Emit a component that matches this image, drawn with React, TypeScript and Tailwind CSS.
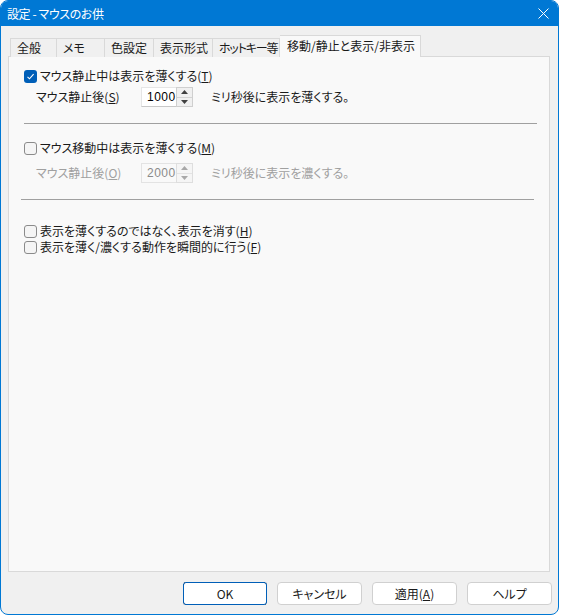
import React from 'react';

const font = "font-['Noto_Sans_CJK_JP','Noto_Sans',sans-serif] [font-feature-settings:'palt']";

const Check = ({ checked }: { checked?: boolean }) =>
  checked ? (
    <span className="w-[13px] h-[13px] rounded-[3px] bg-[#005fb8] flex items-center justify-center shrink-0">
      <svg width="9" height="9" viewBox="0 0 9 9">
        <path d="M1.5 4.8 L3.5 6.8 L7.6 2.2" fill="none" stroke="#fff" strokeWidth="1.1" />
      </svg>
    </span>
  ) : (
    <span className="w-[13px] h-[13px] rounded-[3px] border border-[#8b8b8b] bg-[#f5f5f5] shrink-0" />
  );

const Spin = ({ value, disabled }: { value: string; disabled?: boolean }) => (
  <div className="flex w-[52px] h-[20px]">
    <div
      className={`w-[35px] h-full flex items-center pl-[5px] text-[12px] tracking-[0.5px] font-['Liberation_Sans',sans-serif] border border-r-0 ${
        disabled ? 'bg-[#f9f9f9] border-[#e3e3e3] text-[#8a8a8a]' : 'bg-white border-[#e5e5e5] border-b-[#c8c8c8] text-black'
      }`}
    >
      {value}
    </div>
    <div className={`w-[17px] h-full flex flex-col border ${disabled ? 'border-[#dedede]' : 'border-[#cfcfcf]'}`}>
      <div className={`flex-1 flex items-center justify-center border-b ${disabled ? 'bg-[#f5f5f5] border-[#e3e3e3]' : 'bg-[#f0f0f0] border-[#d4d4d4]'}`}>
        <svg width="7" height="4" viewBox="0 0 7 4">
          <path d="M0 4 L3.5 0 L7 4 Z" fill={disabled ? '#a8a8a8' : '#404040'} />
        </svg>
      </div>
      <div className={`flex-1 flex items-center justify-center ${disabled ? 'bg-[#f5f5f5]' : 'bg-[#f0f0f0]'}`}>
        <svg width="7" height="4" viewBox="0 0 7 4">
          <path d="M0 0 L7 0 L3.5 4 Z" fill={disabled ? '#a8a8a8' : '#404040'} />
        </svg>
      </div>
    </div>
  </div>
);

const tabs = [
  { label: '全般', w: 'w-[47px]', extra: '' },
  { label: 'メモ', w: 'w-[48px]', extra: '' },
  { label: '色設定', w: 'w-[49px]', extra: '' },
  { label: '表示形式', w: 'w-[59px]', extra: '' },
  { label: 'ホットキー等', w: 'w-[67px]', extra: 'tracking-[-1.2px]' },
];

export default function App() {
  return (
    <div className={`w-[561px] h-[616px] bg-white ${font}`}>
      <div className="w-[559px] h-[615px] flex flex-col rounded-[8px] overflow-hidden border border-[#0078d4] bg-[#f0f0f0]">
        {/* Title bar */}
        <div className="h-[25px] bg-[#0078d4] flex items-center justify-between pl-[6px] pr-[9px] text-white text-[12px]">
          <span className="tracking-[-0.4px]">設定 - マウスのお供</span>
          <svg width="11" height="11" viewBox="0 0 11 11">
            <path d="M0.5 0.5 L10.5 10.5 M10.5 0.5 L0.5 10.5" stroke="#fff" strokeWidth="1" />
          </svg>
        </div>

        {/* Body */}
        <div className="flex-1 flex flex-col pl-[7px] pr-[8px] pt-[9px] pb-[9px] text-[12px] text-[#1a1a1a]">
          {/* Tabs */}
          <div className="flex items-end h-[22px] pl-[2px] relative z-10 -mb-px">
            {tabs.map((t, i) => (
              <div
                key={t.label}
                className={`${t.w} h-[19px] border-t border-r border-[#d9d9d9] ${i === 0 ? 'border-l' : ''} bg-[#f0f0f0] pl-[6px] flex items-center whitespace-nowrap ${t.extra}`}
              >
                {t.label}
              </div>
            ))}
            <div className="w-[141px] h-[22px] border-t border-r border-[#d9d9d9] bg-[#f9f9f9] pl-[7px] pb-[2px] flex items-center whitespace-nowrap">
              移動/静止と表示/非表示
            </div>
          </div>

          {/* Panel */}
          <div className="flex-1 border border-[#d9d9d9] bg-[#f9f9f9] pt-[11px] pl-[15px] pr-[12px] flex flex-col">
            <label className="flex items-center gap-[3px] h-[16px]">
              <Check checked />
              <span>
                マウス静止中は表示を薄くする(<span className="underline">T</span>)
              </span>
            </label>
            <div className="flex items-center h-[20px] mt-[3px] pl-[12px]">
              <span className="w-[105px]">
                マウス静止後(<span className="underline">S</span>)
              </span>
              <Spin value="1000" />
              <span className="ml-[18px]">ミリ秒後に表示を薄くする。</span>
            </div>
            <div className="h-px bg-[#a0a0a0] mt-[16px]" />

            <label className="flex items-center gap-[3px] h-[16px] mt-[16px]">
              <Check />
              <span>
                マウス移動中は表示を薄くする(<span className="underline">M</span>)
              </span>
            </label>
            <div className="flex items-center h-[20px] mt-[7px] pl-[12px] text-[#a0a0a0]">
              <span className="w-[105px]">
                マウス静止後(<span className="underline">O</span>)
              </span>
              <Spin value="2000" disabled />
              <span className="ml-[18px]">ミリ秒後に表示を濃くする。</span>
            </div>
            <div className="h-px bg-[#a0a0a0] mt-[16px] -ml-[3px] mr-[3px]" />

            <label className="flex items-center gap-[3px] h-[16px] mt-[23px]">
              <Check />
              <span>
                表示を薄くするのではなく、表示を消す(<span className="underline">H</span>)
              </span>
            </label>
            <label className="flex items-center gap-[3px] h-[16px]">
              <Check />
              <span>
                表示を薄く/濃くする動作を瞬間的に行う(<span className="underline">F</span>)
              </span>
            </label>
          </div>

          {/* Buttons */}
          <div className="flex justify-end gap-[10px] mt-[10px] -mr-[2px]">
            <button className="w-[84px] h-[23px] rounded-[3px] bg-white border border-dotted border-[#1a1a1a] outline outline-1 outline-[#005fb8] -outline-offset-1 text-[12px]">
              OK
            </button>
            <button className="w-[85px] h-[23px] rounded-[4px] bg-white border border-[#d0d0d0] text-[12px]">
              キャンセル
            </button>
            <button className="w-[85px] h-[23px] rounded-[4px] bg-white border border-[#d0d0d0] text-[12px]">
              適用(<span className="underline">A</span>)
            </button>
            <button className="w-[85px] h-[23px] rounded-[4px] bg-white border border-[#d0d0d0] text-[12px]">
              ヘルプ
            </button>
          </div>
        </div>
      </div>
    </div>
  );
}
